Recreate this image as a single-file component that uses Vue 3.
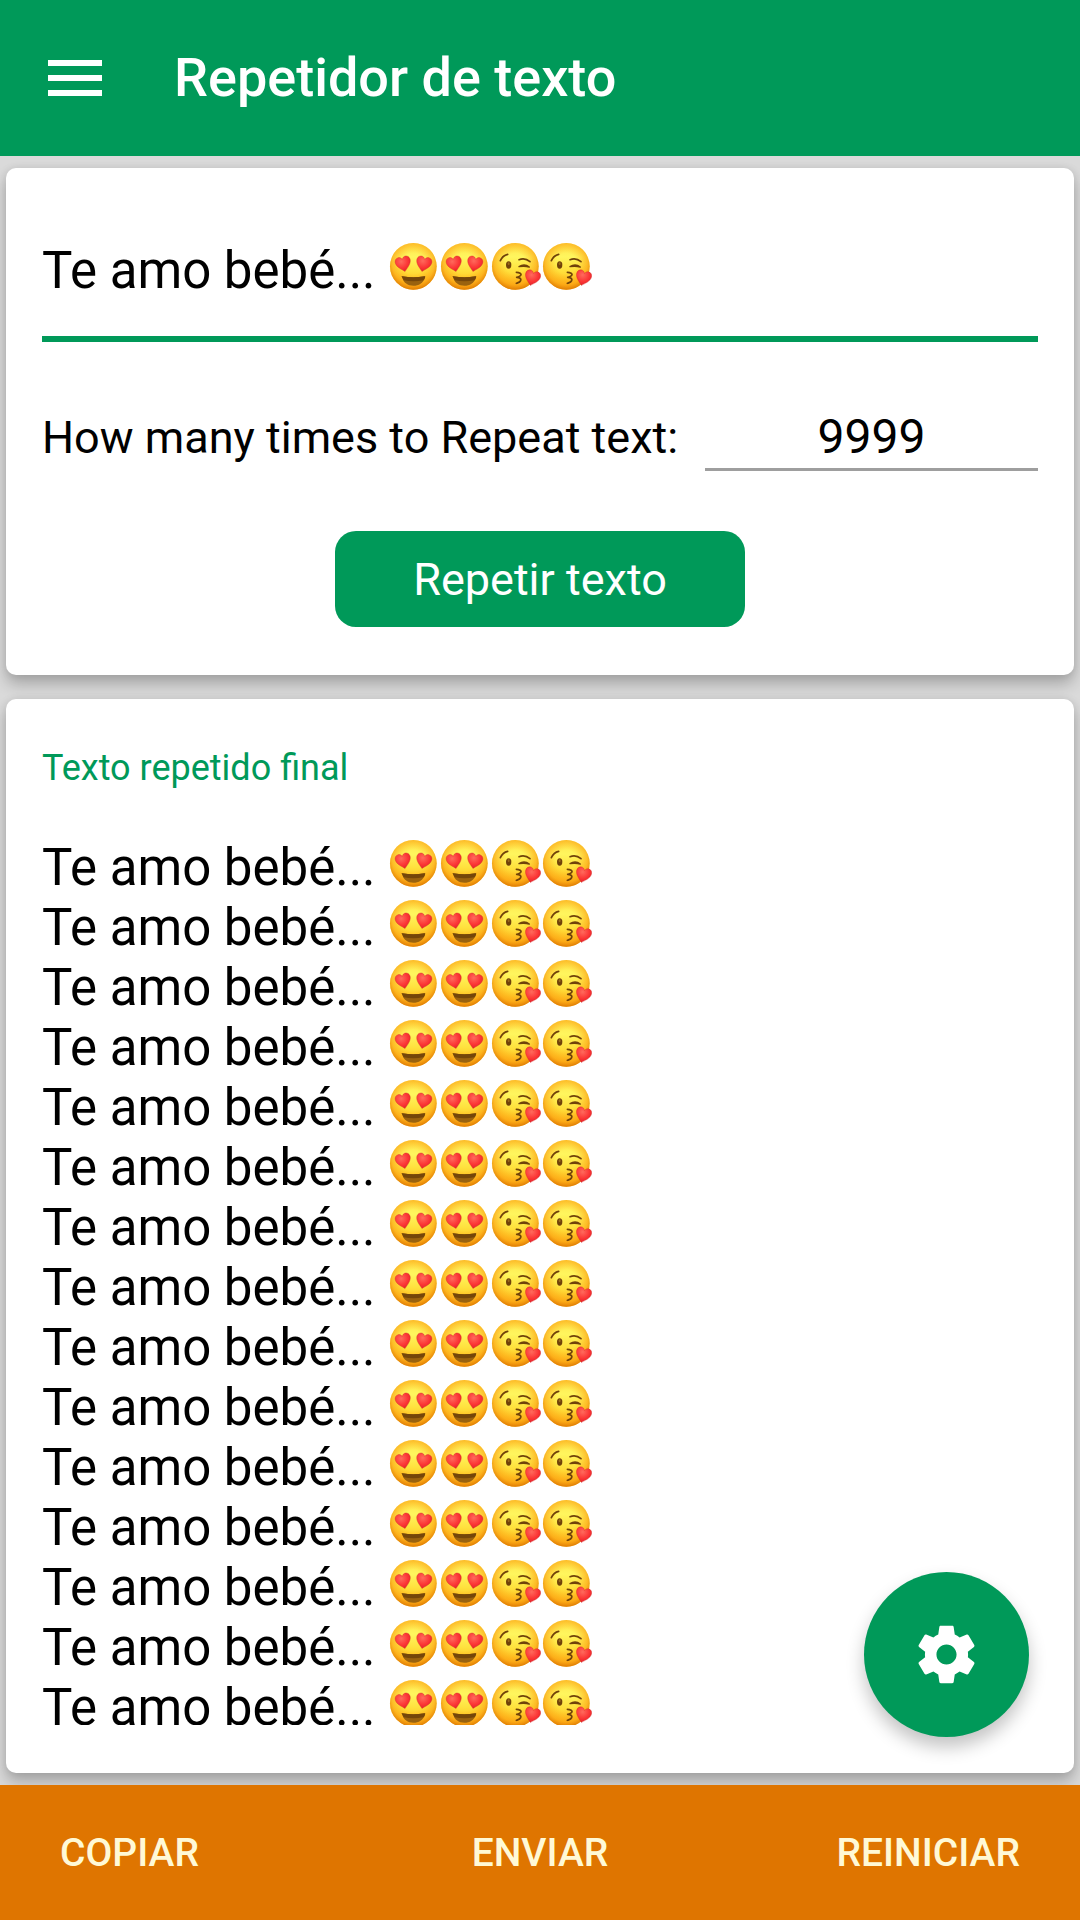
<template>
  <div class="page">
    <!-- Shared emoji artwork -->
    <svg class="defs" width="0" height="0" aria-hidden="true">
      <defs>
        <linearGradient id="face-fill" x1="0" y1="0" x2="0" y2="1">
          <stop offset="0" stop-color="#ffe34a" />
          <stop offset="0.3" stop-color="#fff65e" />
          <stop offset="0.6" stop-color="#ffe03c" />
          <stop offset="1" stop-color="#ffb114" />
        </linearGradient>
        <radialGradient id="face-edge" cx="0.5" cy="0.44" r="0.56">
          <stop offset="0.4" stop-color="#ffa814" stop-opacity="0" />
          <stop offset="0.8" stop-color="#fb9e10" stop-opacity="0.6" />
          <stop offset="1" stop-color="#dd7a04" stop-opacity="0.95" />
        </radialGradient>
        <radialGradient id="heart-fill" cx="0.4" cy="0.3" r="0.75">
          <stop offset="0" stop-color="#ff6a5c" />
          <stop offset="0.6" stop-color="#fb3535" />
          <stop offset="1" stop-color="#dc1f2c" />
        </radialGradient>
        <g id="emoji-face">
          <circle cx="76" cy="76" r="70" fill="url(#face-fill)" />
          <circle cx="76" cy="76" r="70" fill="url(#face-edge)" />
        </g>
        <path
          id="emoji-heart"
          d="M0 23C-8 15-23 5-23-9C-23-17-17-22-11-22C-6-22-2-19 0-14C2-19 6-22 11-22C17-22 23-17 23-9C23 5 8 15 0 23Z"
          fill="url(#heart-fill)"
          stroke="#cf2a20"
          stroke-width="1"
        />
      </defs>
      <symbol id="emoji-love" viewBox="0 0 153 153">
        <use href="#emoji-face" />
        <use href="#emoji-heart" transform="translate(46 69) rotate(-13)" />
        <use href="#emoji-heart" transform="translate(107 69) rotate(13)" />
        <path
          d="M42 108Q39 105 43 106Q76 112 109 106Q113 105 111 110C105 126 93 134 76 134C59 134 47 126 42 108Z"
          fill="#99620f"
        />
        <path d="M42 108Q39 105 43 106Q76 112 109 106Q113 105 111 110Q109 115 106 118Q76 124 47 118Z" fill="#74460a" />
      </symbol>
      <symbol id="emoji-kiss" viewBox="0 0 153 153">
        <use href="#emoji-face" />
        <g fill="none" stroke="#70420a" stroke-linecap="round" stroke-linejoin="round">
          <path d="M31 59Q38 43 53 40" stroke-width="5" />
          <path d="M87 56Q105 49 120 62" stroke-width="5" />
          <path d="M87 77Q103 66 118 78Q103 74 87 77Z" stroke-width="4" fill="#70420a" />
          <path
            d="M79 94C88 94 96 98 92 103C90 107 84 108 80 109C88 109 95 113 92 119C90 124 85 125 79 127"
            stroke-width="5"
          />
        </g>
        <ellipse cx="56" cy="72" rx="8" ry="11" fill="#70420a" />
        <ellipse cx="56" cy="68" rx="3" ry="4" fill="#9b6a1c" />
        <use href="#emoji-heart" transform="translate(127 111) rotate(15)" />
      </symbol>
    </svg>

    <header class="toolbar">
      <button class="menu" type="button" aria-label="Menú">
        <svg viewBox="0 0 24 24" fill="currentColor">
          <path d="M3 18h18v-2H3v2zm0-5h18v-2H3v2zm0-7v2h18V6H3z" />
        </svg>
      </button>
      <h1>Repetidor de texto</h1>
    </header>

    <main class="content">
      <section class="card">
        <div class="message-field">
          <input v-model="message" class="message" type="text" aria-label="Texto" />
          <svg v-for="(name, i) in emojis" :key="i" class="emoji" aria-hidden="true">
            <use :href="`#emoji-${name}`" />
          </svg>
        </div>

        <div class="count-row">
          <label for="count">How many times to Repeat text:</label>
          <input id="count" v-model="count" class="count" type="text" inputmode="numeric" />
        </div>

        <button class="repeat" type="button" @click="repeat">Repetir texto</button>
      </section>

      <section class="card result">
        <h2>Texto repetido final</h2>
        <div class="lines">
          <p v-for="n in visibleLines" :key="n">{{ result }}&nbsp;<svg
            v-for="(name, i) in emojis"
            :key="i"
            class="emoji"
            aria-hidden="true"
          ><use :href="`#emoji-${name}`" /></svg></p>
        </div>
      </section>

      <button class="fab" type="button" aria-label="Ajustes">
        <svg viewBox="0 0 24 24" fill="currentColor">
          <path
            d="M19.43 12.98c.04-.32.07-.64.07-.98s-.03-.66-.07-.98l2.11-1.65c.19-.15.24-.42.12-.64l-2-3.46c-.12-.22-.39-.3-.61-.22l-2.49 1c-.52-.4-1.08-.73-1.69-.98l-.38-2.65C14.46 2.18 14.25 2 14 2h-4c-.25 0-.46.18-.49.42l-.38 2.65c-.61.25-1.17.59-1.69.98l-2.49-1c-.23-.09-.49 0-.61.22l-2 3.46c-.13.22-.07.49.12.64l2.11 1.65c-.04.32-.07.65-.07.98s.03.66.07.98l-2.11 1.65c-.19.15-.24.42-.12.64l2 3.46c.12.22.39.3.61.22l2.49-1c.52.4 1.08.73 1.69.98l.38 2.65c.03.24.24.42.49.42h4c.25 0 .46-.18.49-.42l.38-2.65c.61-.25 1.17-.59 1.69-.98l2.49 1c.23.09.49 0 .61-.22l2-3.46c.12-.22.07-.49-.12-.64l-2.11-1.65zM12 15.5c-1.93 0-3.5-1.57-3.5-3.5s1.57-3.5 3.5-3.5 3.5 1.57 3.5 3.5-1.57 3.5-3.5 3.5z"
          />
        </svg>
      </button>
    </main>

    <footer class="actions">
      <button type="button">COPIAR</button>
      <button type="button">ENVIAR</button>
      <button type="button" @click="reset">REINICIAR</button>
    </footer>
  </div>
</template>

<script setup>
import { ref } from 'vue'

const MAX_VISIBLE = 15

const emojis = ['love', 'love', 'kiss', 'kiss']

const message = ref('Te amo bebé...')
const count = ref('9999')
const result = ref(message.value)
const visibleLines = ref(MAX_VISIBLE)

function repeat() {
  result.value = message.value
  visibleLines.value = Math.min(Number(count.value) || 0, MAX_VISIBLE)
}

function reset() {
  message.value = ''
  visibleLines.value = 0
}
</script>

<style>
body {
  margin: 0;
  background: #dadada;
}
</style>

<style scoped>
.page {
  display: flex;
  flex-direction: column;
  height: 100vh;
  background: #dadada;
  color: #000000;
  font-family: Roboto, 'Liberation Sans', sans-serif;
}

.page * {
  box-sizing: border-box;
}

button,
input {
  margin: 0;
  padding: 0;
  border: none;
  border-radius: 0;
  outline: none;
  background: none;
  color: inherit;
  font-family: inherit;
}

button {
  cursor: pointer;
}

.defs {
  position: absolute;
}

.toolbar {
  position: relative;
  z-index: 1;
  display: flex;
  align-items: center;
  gap: 63px;
  flex: none;
  height: 156px;
  padding: 0 39px;
  background: #009959;
  color: #ffffff;
}

.menu,
.menu svg {
  display: block;
  width: 72px;
  height: 72px;
}

h1 {
  margin: 0;
  font-size: 54px;
  font-weight: 500;
  line-height: 62px;
}

.content {
  position: relative;
  display: flex;
  flex: 1;
  flex-direction: column;
  gap: 24px;
  min-height: 0;
  padding: 12px 6px;
}

.card {
  display: flex;
  flex-direction: column;
  padding: 36px 36px 48px;
  border-radius: 10px;
  background: #ffffff;
  box-shadow:
    0 9px 15px rgba(0, 0, 0, 0.24),
    0 0 9px rgba(0, 0, 0, 0.08);
}

.message-field {
  display: flex;
  padding: 37px 0 35px;
  border-bottom: 6px solid #009959;
}

.message {
  field-sizing: content;
  height: 60px;
  margin-right: 12px;
  font-size: 51px;
  line-height: 60px;
}

.emoji {
  display: inline-block;
  width: 51px;
  height: 51px;
  vertical-align: top;
}

.count-row {
  display: flex;
  align-items: baseline;
  gap: 27px;
  margin-top: 66px;
  font-size: 45px;
}

.count {
  flex: 1;
  min-width: 0;
  height: 63px;
  padding-bottom: 3px;
  border-bottom: 3px solid #9e9e9e;
  font-size: 48px;
  line-height: 57px;
  text-align: center;
}

.repeat {
  align-self: center;
  height: 96px;
  margin-top: 60px;
  padding: 0 78px;
  border-radius: 21px;
  background: #009959;
  color: #ffffff;
  font-size: 45px;
}

.result {
  flex: 1;
  min-height: 0;
  padding-top: 48px;
}

h2 {
  flex: none;
  margin: 0;
  color: #009959;
  font-size: 36px;
  font-weight: 400;
  line-height: 42px;
}

.lines {
  flex: 1;
  min-height: 0;
  margin-top: 49px;
  overflow: hidden;
}

.lines p {
  margin: 0;
  font-size: 51px;
  line-height: 60px;
  white-space: nowrap;
}

.fab {
  position: absolute;
  right: 51px;
  bottom: 48px;
  display: flex;
  align-items: center;
  justify-content: center;
  width: 165px;
  height: 165px;
  border-radius: 50%;
  background: #009959;
  color: #ffffff;
  box-shadow: 0 10px 18px rgba(0, 0, 0, 0.24);
}

.fab svg {
  width: 69px;
  height: 69px;
}

.actions {
  position: relative;
  z-index: 1;
  display: grid;
  grid-template-columns: 1fr auto 1fr;
  align-items: center;
  flex: none;
  height: 135px;
  padding: 0 60px;
  background: #df7500;
  color: #fff9d6;
}

.actions button {
  font-size: 39px;
  font-weight: 500;
}

.actions button:first-child {
  justify-self: start;
}

.actions button:last-child {
  justify-self: end;
}
</style>
